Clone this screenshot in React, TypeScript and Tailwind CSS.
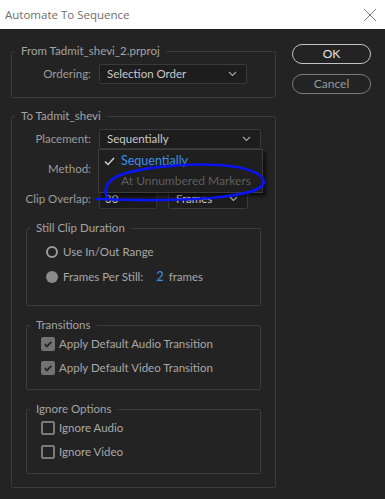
import React from 'react';

const font = { fontFamily: 'Lato, "Open Sans", sans-serif' };

function Chevron() {
  return (
    <svg width="9" height="6" viewBox="0 0 9 6" className="shrink-0">
      <path d="M1 1l3.5 3.5L8 1" fill="none" stroke="#a8a8a8" strokeWidth="1.1" />
    </svg>
  );
}

function Select({ value, width }: { value?: string; width: string }) {
  return (
    <div className={`${width} h-[20px] flex items-center justify-between pl-[7px] pr-[9px] bg-[#1d1d1d] border border-[#3a3a3a] rounded-[2px] text-[#c9c9c9]`}>
      <span>{value}</span>
      <Chevron />
    </div>
  );
}

function Group({ title, children, className = '', inner = '' }: { title: string; children: React.ReactNode; className?: string; inner?: string }) {
  return (
    <fieldset className={`border border-[#3b3b3b] rounded-[2px] min-w-0 ${className}`}>
      <legend className="ml-[3px] px-[6px] leading-[14px] text-[#a3a3a3]">{title}</legend>
      <div className={inner}>{children}</div>
    </fieldset>
  );
}

function Row({ label, children }: { label: string; children: React.ReactNode }) {
  return (
    <div className="flex items-center h-[20px]">
      <div className="w-[79px] text-right text-[#9c9c9c]">{label}</div>
      <div className="ml-[8px] flex items-center gap-[11px]">{children}</div>
    </div>
  );
}

function Check({ checked, label }: { checked: boolean; label: string }) {
  return (
    <div className="flex items-center h-[20px] gap-[4px]">
      {checked ? (
        <div className="w-[14px] h-[14px] rounded-[2px] bg-[#727272] flex items-center justify-center">
          <svg width="10" height="10" viewBox="0 0 10 10">
            <path d="M1.8 5.2l2.2 2.2L8.3 2.8" fill="none" stroke="#262626" strokeWidth="1.8" />
          </svg>
        </div>
      ) : (
        <div className="w-[14px] h-[14px] rounded-[2px] border-2 border-[#7a7a7a]" />
      )}
      <span className="text-[#a8a8a8]">{label}</span>
    </div>
  );
}

export default function App() {
  return (
    <div className="w-[385px] h-[499px] bg-[#232323] flex flex-col text-[11.5px] overflow-hidden" style={font}>
      <div className="h-[29px] bg-white flex items-center justify-between pl-[5px] pr-[8px] shrink-0">
        <span className="text-[#6e6e6e] text-[11.5px]" style={{ fontFamily: '"Open Sans", sans-serif' }}>Automate To Sequence</span>
        <svg width="14" height="14" viewBox="0 0 14 14">
          <path d="M1 1l12 12M13 1L1 13" stroke="#7a7a7a" strokeWidth="1" />
        </svg>
      </div>

      <div className="relative flex pt-[15px] pl-[11px]">
        <div className="w-[265px] flex flex-col">
          <Group title="From Tadmit_shevi_2.prproj" className="pt-[6px] pb-[13px]">
            <Row label="Ordering:">
              <Select value="Selection Order" width="w-[148px]" />
            </Row>
          </Group>

          <Group title="To Tadmit_shevi" className="mt-[11px] pt-[6px] pb-[13px]">
            <div className="flex flex-col gap-[10px]">
              <Row label="Placement:">
                <Select value="Sequentially" width="w-[162px]" />
              </Row>
              <Row label="Method:">
                <Select width="w-[162px]" />
              </Row>
              <Row label="Clip Overlap:">
                <div className="w-[58px] h-[20px] bg-[#1a1a1a] border border-[#333] rounded-[2px] flex items-center pl-[5px] text-[#c9c9c9]">30</div>
                <Select value="Frames" width="w-[80px]" />
              </Row>
            </div>

            <div className="px-[14px]">
              <Group title="Still Clip Duration" className="mt-[12px] pt-[7px] pb-[18px]" inner="pl-[19px]">
                <div className="flex flex-col gap-[5px]">
                  <div className="flex items-center h-[20px] gap-[5px]">
                    <div className="w-[12px] h-[12px] rounded-full border-2 border-[#9a9a9a]" />
                    <span className="text-[#a8a8a8]">Use In/Out Range</span>
                  </div>
                  <div className="flex items-center h-[20px] gap-[5px]">
                    <div className="w-[12px] h-[12px] rounded-full bg-[#8a8a8a]" />
                    <span className="text-[#a8a8a8]">Frames Per Still:</span>
                    <span className="ml-[8px] text-[#3d8ee8] text-[13px]">2</span>
                    <span className="text-[#a8a8a8]">frames</span>
                  </div>
                </div>
              </Group>

              <Group title="Transitions" className="mt-[12px] pt-[2px] pb-[11px]" inner="pl-[14px]">
                <div className="flex flex-col gap-[4px]">
                  <Check checked label="Apply Default Audio Transition" />
                  <Check checked label="Apply Default Video Transition" />
                </div>
              </Group>

              <Group title="Ignore Options" className="mt-[12px] pt-[2px] pb-[11px]" inner="pl-[14px]">
                <div className="flex flex-col gap-[4px]">
                  <Check checked={false} label="Ignore Audio" />
                  <Check checked={false} label="Ignore Video" />
                </div>
              </Group>
            </div>
          </Group>
        </div>

        <div className="ml-[16px] flex flex-col gap-[10px]">
          <button className="w-[79px] h-[20px] rounded-full border border-[#c4c4c4] text-[#e6e6e6] text-[12px]">OK</button>
          <button className="w-[79px] h-[20px] rounded-full border border-[#7c7c7c] text-[#9a9a9a] text-[12px]">Cancel</button>
        </div>

        {/* placement dropdown menu */}
        <div className="absolute left-[98px] top-[120px] w-[165px] h-[44px] bg-[#1f1f1f] border border-[#3c3c3c] shadow-[3px_3px_3px_rgba(0,0,0,0.6)] flex flex-col py-[1px]">
          <div className="flex items-center h-[21px]">
            <svg width="11" height="9" viewBox="0 0 11 9" className="ml-[5px]">
              <path d="M1 4.5l3 3L10 1" fill="none" stroke="#cfcfcf" strokeWidth="1.5" />
            </svg>
            <span className="ml-[6px] text-[#3d8ee8] text-[12.5px]">Sequentially</span>
          </div>
          <div className="flex items-center h-[21px]">
            <span className="ml-[22px] text-[#5e5e5e] text-[12px]">At Unnumbered Markers</span>
          </div>
        </div>

        {/* hand-drawn annotation */}
        <svg className="absolute left-0 top-0 pointer-events-none" width="385" height="470">
          <path
            d="M96 170 C120 171 170 172 212 169 C242 166 263 162 264 153 C263 144 246 138 220 136 C180 134 140 139 120 146 C111 150 107 154 106 159 C105 163 106 167 108 170"
            fill="none"
            stroke="#0a14f0"
            strokeWidth="2.6"
            strokeLinecap="round"
          />
        </svg>
      </div>
    </div>
  );
}
